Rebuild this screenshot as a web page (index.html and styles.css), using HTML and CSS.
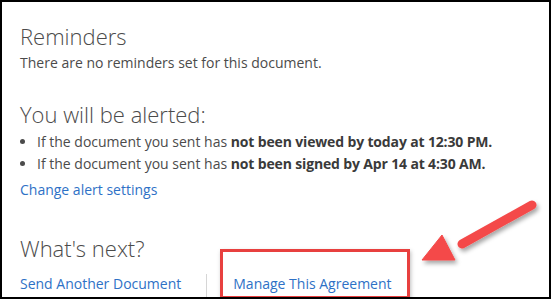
FILE: index.html
```html
<!DOCTYPE html>
<html>
<head>
<meta charset="utf-8">
<link rel="stylesheet" href="styles.css">
</head>
<body>
<div class="frame">
  <section class="block">
    <h2 class="title">Reminders</h2>
    <p class="text">There are no reminders set for this document.</p>
  </section>
  <section class="block alerts">
    <h2 class="title">You will be alerted:</h2>
    <ul class="list">
      <li>If the document you sent has <b>not been viewed by today at 12:30 PM.</b></li>
      <li>If the document you sent has <b>not been signed by Apr 14 at 4:30 AM.</b></li>
    </ul>
    <a class="link settings" href="#">Change alert settings</a>
  </section>
  <section class="block next">
    <h2 class="title">What's next?</h2>
    <div class="actions">
      <a class="link" href="#">Send Another Document</a>
      <span class="sep"></span>
      <a class="link" href="#">Manage This Agreement</a>
    </div>
  </section>
  <div class="highlight"></div>
  <svg class="arrow" width="140" height="90" viewBox="0 0 140 90">
    <defs>
      <filter id="sh" x="-20%" y="-20%" width="140%" height="140%">
        <feDropShadow dx="2" dy="3" stdDeviation="2" flood-color="#000" flood-opacity="0.35"/>
      </filter>
    </defs>
    <g filter="url(#sh)" fill="#f44a4a" stroke="#f44a4a">
      <line x1="122" y1="15" x2="52" y2="54" stroke-width="9" stroke-linecap="round"/>
      <polygon points="12,70 32,45 45,70" stroke-width="1" stroke-linejoin="round"/>
    </g>
  </svg>
</div>
</body>
</html>
```
FILE: styles.css
```css
html, body { margin: 0; padding: 0; background: #fff; }
body { font-family: "Open Sans", "Lato", sans-serif; color: #4b4b4b; }
.frame {
  position: relative;
  width: 551px; height: 299px;
  box-sizing: border-box;
  border: 2px solid #000;
  padding: 20px 0 0 18px;
  overflow: hidden;
}
.block { margin: 0; }
.title { margin: 0; font-weight: 300; font-size: 22px; line-height: 28px; color: #4b4b4b; }
.text { margin: 3px 0 0 0; font-size: 14px; line-height: 20px; }
.alerts { margin-top: 27px; }
.list { margin: 3px 0 0 0; padding: 0 0 0 17px; font-size: 14px; line-height: 22px; }
.list b { font-weight: 700; color: #3a3a3a; letter-spacing: -0.15px; }
.link { color: #2e71c6; text-decoration: none; font-size: 14px; line-height: 22px; }
.settings { display: block; margin-top: 4px; }
.next { margin-top: 33px; }
.actions { display: flex; align-items: flex-start; margin-top: 11px; }
.sep { width: 1px; height: 30px; background: #d6d6d6; margin: 1px 26px 0 25px; }
.highlight {
  position: absolute;
  left: 218px; top: 247px;
  width: 184px; height: 44px;
  border: 3px solid #e8403f;
  box-shadow: 1px 2px 4px rgba(0,0,0,0.25);
}
.arrow { position: absolute; left: 408px; top: 188px; }
```
